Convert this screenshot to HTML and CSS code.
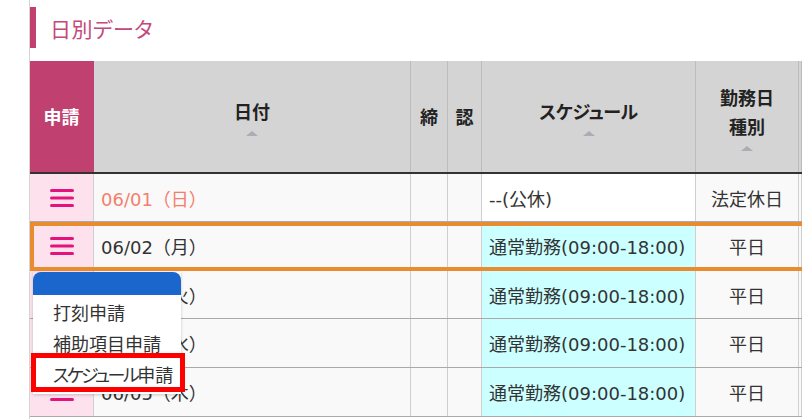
FILE: index.html
```html
<!DOCTYPE html>
<html lang="ja">
<head>
<meta charset="utf-8">
<title>日別データ</title>
<link rel="stylesheet" href="styles.css">
</head>
<body>
<div class="page">
  <div class="title">
    <span class="title-bar"></span>
    <h2 class="title-text">日別データ</h2>
  </div>
  <div class="sheet">
    <div class="row head">
      <div class="cell apply-head">申請</div>
      <div class="cell"><span>日付</span><span class="sort"></span></div>
      <div class="cell">締</div>
      <div class="cell">認</div>
      <div class="cell"><span class="kana-head">スケジュール</span><span class="sort"></span></div>
      <div class="cell"><span>勤務日<br>種別</span><span class="sort"></span></div>
      <div class="cell"></div>
    </div>

    <div class="row first">
      <div class="cell apply"><svg class="burger" width="24" height="18" viewBox="0 0 24 18"><rect x="0" y="0" width="24" height="3" rx="1.5"/><rect x="0" y="7.5" width="24" height="3" rx="1.5"/><rect x="0" y="15" width="24" height="3" rx="1.5"/></svg></div>
      <div class="cell date holiday">06/01（日）</div>
      <div class="cell"></div>
      <div class="cell"></div>
      <div class="cell sched off">--(公休)</div>
      <div class="cell kind">法定休日</div>
      <div class="cell"></div>
    </div>

    <div class="row selected">
      <div class="cell apply"><svg class="burger" width="24" height="18" viewBox="0 0 24 18"><rect x="0" y="0" width="24" height="3" rx="1.5"/><rect x="0" y="7.5" width="24" height="3" rx="1.5"/><rect x="0" y="15" width="24" height="3" rx="1.5"/></svg></div>
      <div class="cell date">06/02（月）</div>
      <div class="cell"></div>
      <div class="cell"></div>
      <div class="cell sched">通常勤務(09:00-18:00)</div>
      <div class="cell kind">平日</div>
      <div class="cell"></div>
    </div>

    <div class="row">
      <div class="cell apply"><svg class="burger" width="24" height="18" viewBox="0 0 24 18"><rect x="0" y="0" width="24" height="3" rx="1.5"/><rect x="0" y="7.5" width="24" height="3" rx="1.5"/><rect x="0" y="15" width="24" height="3" rx="1.5"/></svg></div>
      <div class="cell date">06/03（火）</div>
      <div class="cell"></div>
      <div class="cell"></div>
      <div class="cell sched">通常勤務(09:00-18:00)</div>
      <div class="cell kind">平日</div>
      <div class="cell"></div>
    </div>

    <div class="row">
      <div class="cell apply"><svg class="burger" width="24" height="18" viewBox="0 0 24 18"><rect x="0" y="0" width="24" height="3" rx="1.5"/><rect x="0" y="7.5" width="24" height="3" rx="1.5"/><rect x="0" y="15" width="24" height="3" rx="1.5"/></svg></div>
      <div class="cell date">06/04（水）</div>
      <div class="cell"></div>
      <div class="cell"></div>
      <div class="cell sched">通常勤務(09:00-18:00)</div>
      <div class="cell kind">平日</div>
      <div class="cell"></div>
    </div>

    <div class="row">
      <div class="cell apply"><svg class="burger" width="24" height="18" viewBox="0 0 24 18"><rect x="0" y="0" width="24" height="3" rx="1.5"/><rect x="0" y="7.5" width="24" height="3" rx="1.5"/><rect x="0" y="15" width="24" height="3" rx="1.5"/></svg></div>
      <div class="cell date">06/05（木）</div>
      <div class="cell"></div>
      <div class="cell"></div>
      <div class="cell sched">通常勤務(09:00-18:00)</div>
      <div class="cell kind">平日</div>
      <div class="cell"></div>
    </div>

    <div class="menu">
      <div class="menu-head"></div>
      <ul class="menu-body">
        <li class="menu-item">打刻申請</li>
        <li class="menu-item">補助項目申請</li>
        <li class="menu-item"><span class="kana">スケジュール</span>申請</li>
      </ul>
    </div>
    <div class="annot"></div>
  </div>
</div>
</body>
</html>
```

FILE: styles.css
```css
* { box-sizing: border-box; }

body {
  margin: 0;
  background: #fff;
  color: #333;
  font-family: "DejaVu Sans", "Noto Sans CJK JP", sans-serif;
  overflow: hidden;
}

.page {
  margin-left: 29px;
  padding-top: 7px;
  border-left: 1px solid #d4d4d4;
  height: 419px;
}

.title {
  display: flex;
  align-items: center;
  gap: 14px;
  height: 41px;
  margin-bottom: 13px;
}

.title-bar {
  width: 6px;
  height: 41px;
  background: #c0406f;
}

.title-text {
  margin: 0;
  font-family: "Noto Sans CJK JP", sans-serif;
  font-feature-settings: "palt";
  font-weight: 400;
  font-size: 21px;
  color: #c4487a;
  letter-spacing: 0.5px;
}

.sheet {
  position: relative;
}

.row {
  display: grid;
  grid-template-columns: 64px 317px 37px 34px 214px 103px 1fr;
  height: 48.7px;
  border-bottom: 1px solid #a9a9a9;
}

.row.first { height: 48px; }

.cell {
  display: flex;
  align-items: center;
  border-right: 1px solid #cfcfcf;
  background: #f9f9f9;
  font-size: 18px;
  white-space: nowrap;
  overflow: hidden;
}

.head {
  height: 113px;
  border-bottom: 2px solid #333;
}

.head .cell {
  flex-direction: column;
  justify-content: center;
  background: #d4d4d4;
  border-right-color: #bcbcbc;
  font-family: "Noto Sans CJK JP", sans-serif;
  font-weight: 700;
  line-height: 29px;
  text-align: center;
  color: #222;
}

.head .apply-head {
  background: #c0406f;
  color: #fff;
  border-right-color: #c0406f;
}

.kana-head {
  font-feature-settings: "palt";
  letter-spacing: -0.4px;
}

.sort {
  width: 0;
  height: 0;
  border-left: 6px solid transparent;
  border-right: 6px solid transparent;
  border-bottom: 5px solid #abacb4;
  margin-top: 5px;
}

.apply {
  justify-content: center;
  background: #fde1ec;
}

.burger { fill: #e3137b; display: block; }

.date { padding-left: 7px; }
.date.holiday { color: #f47f6e; }

.sched {
  padding-left: 7px;
  background: #ccffff;
}
.sched.off { background: #fff; }

.kind {
  justify-content: center;
  font-family: "Noto Sans CJK JP", sans-serif;
}

.row.selected { position: relative; }
.row.selected::after {
  content: "";
  position: absolute;
  grid-column: 1 / -1;
  grid-row: 1;
  left: 0;
  right: -8px;
  top: 0;
  bottom: -1px;
  border: 4px solid #e98b2f;
  pointer-events: none;
}

.menu {
  position: absolute;
  left: 3px;
  top: 211px;
  width: 148px;
  box-shadow: 0 1px 3px rgba(0, 0, 0, 0.2);
}

.menu-head {
  height: 23px;
  background: #1b66cc;
  border-radius: 8px 8px 0 0;
}

.menu-body {
  list-style: none;
  margin: 0;
  padding: 2px 0 4px;
  background: #fff;
}

.menu-item {
  height: 31px;
  line-height: 31px;
  padding-left: 20px;
  font-family: "Noto Sans CJK JP", sans-serif;
  font-size: 18px;
  color: #333;
  white-space: nowrap;
}

.kana {
  font-feature-settings: "palt";
  letter-spacing: -2.5px;
}

.annot {
  position: absolute;
  left: 1px;
  top: 292px;
  width: 154px;
  height: 39px;
  border: 5px solid #ff0000;
}
```
